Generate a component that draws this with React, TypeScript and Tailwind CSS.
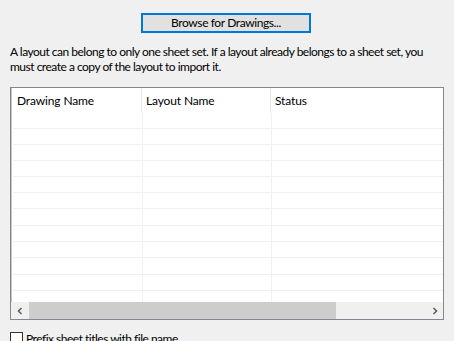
import React from "react";

const rowHeights = [16, 16, 16, 16, 16, 16, 17, 16, 16, 17, 16, 16, 14];

export default function App() {
  return (
    <div
      className="w-[454px] h-[341px] overflow-hidden bg-[#f0f0f0] text-[12px] text-black flex flex-col tracking-[-0.14px]"
      style={{ fontFamily: 'Lato, "Liberation Sans", Arial, sans-serif' }}
    >
      <div className="pt-[13px] pl-[141px]">
        <button className="w-[170px] h-[20px] border border-[#0078d7] bg-[#e1e1e1] flex items-center justify-center leading-none p-0 outline outline-1 outline-offset-[-2px] outline-[#0078d7] text-[12px] tracking-[-0.4px]">
          Browse for Drawings...
        </button>
      </div>
      <p className="mt-[11px] ml-[10px] leading-[15px] whitespace-nowrap tracking-[-0.5px]">
        A layout can belong to only one sheet set. If a layout already belongs to a sheet set, you
        <br />
        must create a copy of the layout to import it.
      </p>
      <div className="mt-[13px] ml-[10px] w-[434px] h-[233px] border border-[#828790] bg-white flex flex-col overflow-hidden shrink-0">
        <div className="h-[25px] flex shrink-0 border-l border-[#c8c8c8]">
          <div className="w-[130px] border-r border-[#e5e5e5] pl-[5px] flex items-center">Drawing Name</div>
          <div className="w-[129px] border-r border-[#e5e5e5] pl-[4px] flex items-center">Layout Name</div>
          <div className="flex-1 pl-[4px] flex items-center">Status</div>
        </div>
        <div className="flex-1 flex flex-col overflow-hidden border-l border-[#c8c8c8] pl-[1px]">
          {rowHeights.map((h, i) => (
            <div key={i} className="flex shrink-0 border-b border-[#f0f0f0]" style={{ height: h }}>
              <div className="w-[130px] border-r border-[#f0f0f0]" />
              <div className="w-[129px] border-r border-[#f0f0f0]" />
              <div className="flex-1" />
            </div>
          ))}
        </div>
        <div className="h-[17px] shrink-0 flex bg-[#f0f0f0]">
          <div className="w-[17px] flex items-center justify-center">
            <svg width="8" height="8" viewBox="0 0 8 8">
              <path d="M5.5 1 L2.5 4 L5.5 7" stroke="#606060" strokeWidth="1.6" fill="none" />
            </svg>
          </div>
          <div className="w-[307px] ml-[1px] bg-[#cdcdcd]" />
          <div className="flex-1" />
          <div className="w-[17px] flex items-center justify-center">
            <svg width="8" height="8" viewBox="0 0 8 8">
              <path d="M2.5 1 L5.5 4 L2.5 7" stroke="#606060" strokeWidth="1.6" fill="none" />
            </svg>
          </div>
        </div>
      </div>
      <div className="mt-[11px] ml-[10px] flex items-center gap-[3px] shrink-0">
        <div className="w-[13px] h-[13px] border border-[#333333] bg-white shrink-0" />
        <span className="leading-[15px] tracking-[-0.5px]">Prefix sheet titles with file name</span>
      </div>
    </div>
  );
}
